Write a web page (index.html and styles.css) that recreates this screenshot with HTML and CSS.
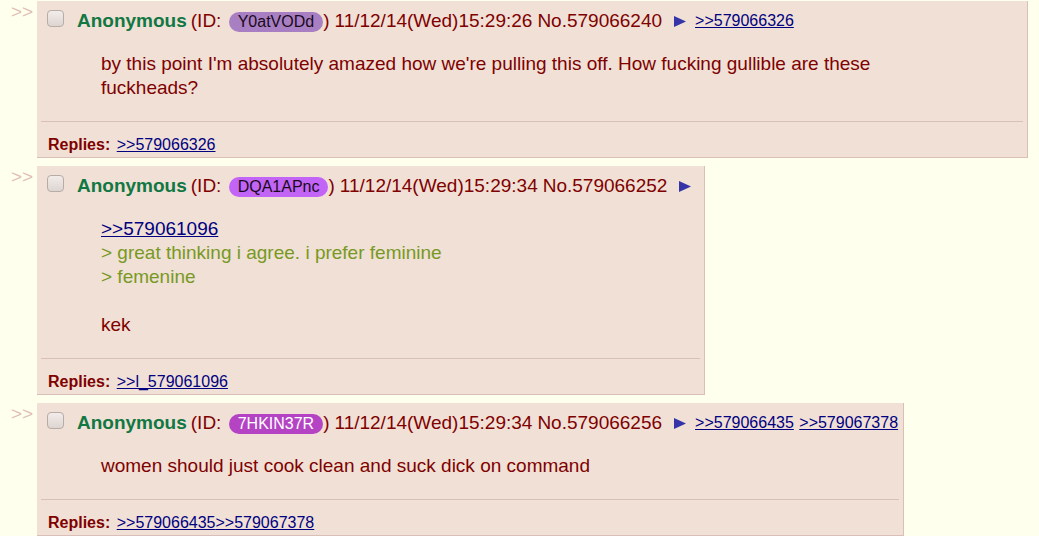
FILE: index.html
```html
<!DOCTYPE html>
<html lang="en">

<head>
    <meta charset="UTF-8">
    <meta name="viewport" content="width=device-width, initial-scale=1.0">
    <title>/b/ - Random</title>
    <link rel="stylesheet" href="styles.css">
</head>

<body>
    <div class="thread">

        <div class="post-container">
            <div class="side-arrows">&gt;&gt;</div>
            <div class="post">
                <div class="post-info">
                    <span class="check"></span>
                    <span class="name">Anonymous</span>
                    <span class="poster-id">(ID: <span class="id-pill id-1">Y0atVODd</span>)</span>
                    <span class="date">11/12/14(Wed)15:29:26</span>
                    <span class="post-num">No.579066240</span>
                    <svg class="menu-arrow" width="12" height="11" viewBox="0 0 12 11"><polygon points="0,0 12,5.5 0,11" /></svg>
                    <span class="backlinks"><a href="#">&gt;&gt;579066326</a></span>
                </div>
                <blockquote class="message">by this point I'm absolutely amazed how we're pulling this off. How fucking gullible are these fuckheads?</blockquote>
                <hr class="divider">
                <div class="replies">
                    <span class="replies-label">Replies:</span> <a href="#">&gt;&gt;579066326</a>
                </div>
            </div>
        </div>

        <div class="post-container">
            <div class="side-arrows">&gt;&gt;</div>
            <div class="post">
                <div class="post-info">
                    <span class="check"></span>
                    <span class="name">Anonymous</span>
                    <span class="poster-id">(ID: <span class="id-pill id-2">DQA1APnc</span>)</span>
                    <span class="date">11/12/14(Wed)15:29:34</span>
                    <span class="post-num">No.579066252</span>
                    <svg class="menu-arrow" width="12" height="11" viewBox="0 0 12 11"><polygon points="0,0 12,5.5 0,11" /></svg>
                </div>
                <blockquote class="message">
                    <a href="#" class="quote-link">&gt;&gt;579061096</a><br>
                    <span class="quote">&gt; great thinking i agree. i prefer feminine</span><br>
                    <span class="quote">&gt; femenine</span><br>
                    <br>
                    kek
                </blockquote>
                <hr class="divider">
                <div class="replies">
                    <span class="replies-label">Replies:</span> <a href="#">&gt;&gt;l_579061096</a>
                </div>
            </div>
        </div>

        <div class="post-container">
            <div class="side-arrows">&gt;&gt;</div>
            <div class="post">
                <div class="post-info">
                    <span class="check"></span>
                    <span class="name">Anonymous</span>
                    <span class="poster-id">(ID: <span class="id-pill id-3">7HKIN37R</span>)</span>
                    <span class="date">11/12/14(Wed)15:29:34</span>
                    <span class="post-num">No.579066256</span>
                    <svg class="menu-arrow" width="12" height="11" viewBox="0 0 12 11"><polygon points="0,0 12,5.5 0,11" /></svg>
                    <span class="backlinks"><a href="#">&gt;&gt;579066435</a> <a href="#">&gt;&gt;579067378</a></span>
                </div>
                <blockquote class="message">women should just cook clean and suck dick on command</blockquote>
                <hr class="divider">
                <div class="replies">
                    <span class="replies-label">Replies:</span> <a href="#">&gt;&gt;579066435</a><a href="#">&gt;&gt;579067378</a>
                </div>
            </div>
        </div>

    </div>
</body>

</html>
```

FILE: styles.css
```css
* {
    margin: 0;
    padding: 0;
    box-sizing: border-box;
}

body {
    background: #ffffee;
    color: #800000;
    font-family: 'Liberation Sans', Arial, Helvetica, sans-serif;
    font-size: 19px;
}

a {
    color: #000080;
}

.thread {
    padding: 1px 11px 0 0;
}

.post-container {
    display: flex;
    align-items: flex-start;
    margin-bottom: 8px;
}

.side-arrows {
    width: 37px;
    flex-shrink: 0;
    padding: 1px 0 0 11px;
    color: #e0bfb7;
    font-size: 19px;
    line-height: 20px;
}

.post {
    background: #f0e0d6;
    border-right: 1px solid #d9bfb7;
    border-bottom: 1px solid #d9bfb7;
    padding: 4px 4px 0 4px;
    width: fit-content;
    min-width: 0;
}

/* header line */
.post-info {
    display: flex;
    align-items: center;
    white-space: nowrap;
    height: 32px;
    padding-left: 6px;
}

.check {
    width: 17px;
    height: 17px;
    border: 1px solid #b8aca6;
    border-radius: 4px;
    background: linear-gradient(#f2ecea, #ddd5d1);
    margin-right: 13px;
    margin-top: -5px;
}

.name {
    color: #117743;
    font-weight: 700;
    margin-right: 4px;
}

.id-pill {
    display: inline-block;
    border-radius: 10px;
    padding: 0 9px;
    font-size: 16px;
    line-height: 20px;
    color: #1a0a1a;
    margin-left: 2px;
}

.id-1 {
    background: #a97fc4;
}

.id-2 {
    background: #c264f5;
}

.id-3 {
    background: #b444c4;
    color: #ffffff;
}

.poster-id {
    margin-right: 5px;
}

.date {
    margin-right: 5px;
}

.menu-arrow {
    fill: #3535a8;
    margin: 0 9px 0 12px;
}

.backlinks {
    font-size: 16px;
}

.backlinks a {
    margin-right: 1px;
}

/* body */
.message {
    margin: 15px 80px 0 60px;
    line-height: 24px;
}

.quote {
    color: #789922;
}

.divider {
    border: none;
    border-top: 1px solid #d9bfb7;
    margin-top: 21px;
}

.replies {
    font-size: 16px;
    line-height: 24px;
    padding: 11px 0 0 7px;
    height: 35px;
}

.replies-label {
    font-weight: 700;
    margin-right: 2px;
}
```
